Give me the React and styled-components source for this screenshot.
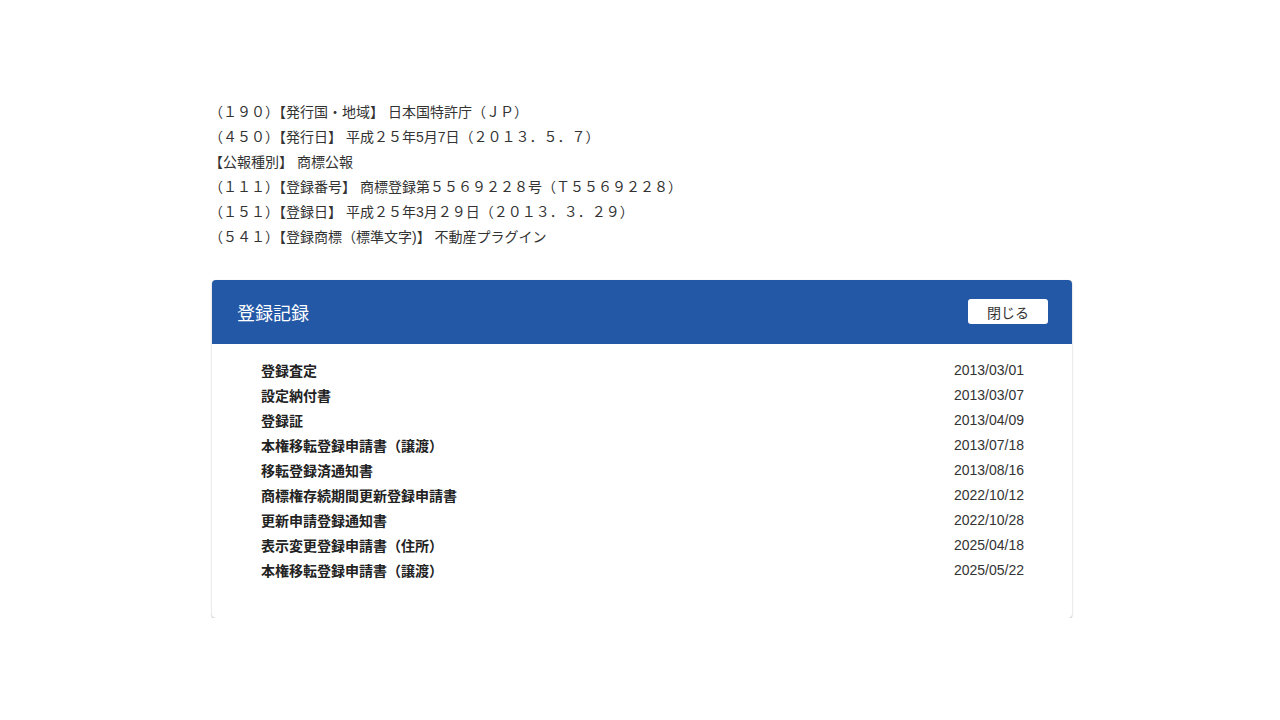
import React from "react";
import styled, { createGlobalStyle } from "styled-components";

const Global = createGlobalStyle`
  html, body { margin: 0; padding: 0; background: #fff; }
  body { font-family: "Liberation Sans", "Noto Sans CJK JP", sans-serif; color: #333; }
`;

const Page = styled.div`
  width: 860px;
  margin: 0 208px 0 212px;
  padding-top: 100px;
`;

const Info = styled.div`
  margin: 0 0 30px -3px;
  font-size: 14px;
  line-height: 25px;
  color: #333;
`;

const InfoLine = styled.div`
  white-space: nowrap;
`;

const Card = styled.section`
  background: #fff;
  border-radius: 4px;
  box-shadow: 0 1px 2px rgba(0, 0, 0, 0.28), 0 0 1px rgba(0, 0, 0, 0.1);
  overflow: hidden;
`;

const Header = styled.header`
  height: 64px;
  background: #2358a6;
  display: flex;
  align-items: center;
  justify-content: space-between;
  padding: 0 24px 1px 25px;
  box-sizing: border-box;
`;

const Title = styled.h2`
  margin: 0;
  font-size: 18px;
  font-weight: 400;
  color: #fff;
`;

const CloseButton = styled.button`
  width: 80px;
  height: 25px;
  border: none;
  border-radius: 3px;
  background: #fff;
  color: #333;
  font-family: inherit;
  font-size: 14px;
  padding: 0;
  cursor: pointer;
`;

const List = styled.ul`
  list-style: none;
  margin: 0;
  padding: 13px 48px 35px 49px;
`;

const Row = styled.li`
  display: flex;
  justify-content: space-between;
  align-items: center;
  height: 25.1px;
  font-size: 14px;
`;

const Name = styled.span`
  font-weight: 700;
  color: #222;
`;

const DateText = styled.span`
  font-size: 14px;
  color: #333;
`;

const info = [
  "（１９０）【発行国・地域】 日本国特許庁（ＪＰ）",
  "（４５０）【発行日】 平成２５年5月7日（２０１３．５．７）",
  "【公報種別】 商標公報",
  "（１１１）【登録番号】 商標登録第５５６９２２８号（Ｔ５５６９２２８）",
  "（１５１）【登録日】 平成２５年3月２９日（２０１３．３．２９）",
  "（５４１）【登録商標（標準文字)】 不動産プラグイン",
];

const records = [
  ["登録査定", "2013/03/01"],
  ["設定納付書", "2013/03/07"],
  ["登録証", "2013/04/09"],
  ["本権移転登録申請書（譲渡）", "2013/07/18"],
  ["移転登録済通知書", "2013/08/16"],
  ["商標権存続期間更新登録申請書", "2022/10/12"],
  ["更新申請登録通知書", "2022/10/28"],
  ["表示変更登録申請書（住所）", "2025/04/18"],
  ["本権移転登録申請書（譲渡）", "2025/05/22"],
];

export default function App() {
  return (
    <>
      <Global />
      <Page>
        <Info>
          {info.map((t, i) => (
            <InfoLine key={i}>{t}</InfoLine>
          ))}
        </Info>
        <Card>
          <Header>
            <Title>登録記録</Title>
            <CloseButton>閉じる</CloseButton>
          </Header>
          <List>
            {records.map(([n, d], i) => (
              <Row key={i}>
                <Name>{n}</Name>
                <DateText>{d}</DateText>
              </Row>
            ))}
          </List>
        </Card>
      </Page>
    </>
  );
}
